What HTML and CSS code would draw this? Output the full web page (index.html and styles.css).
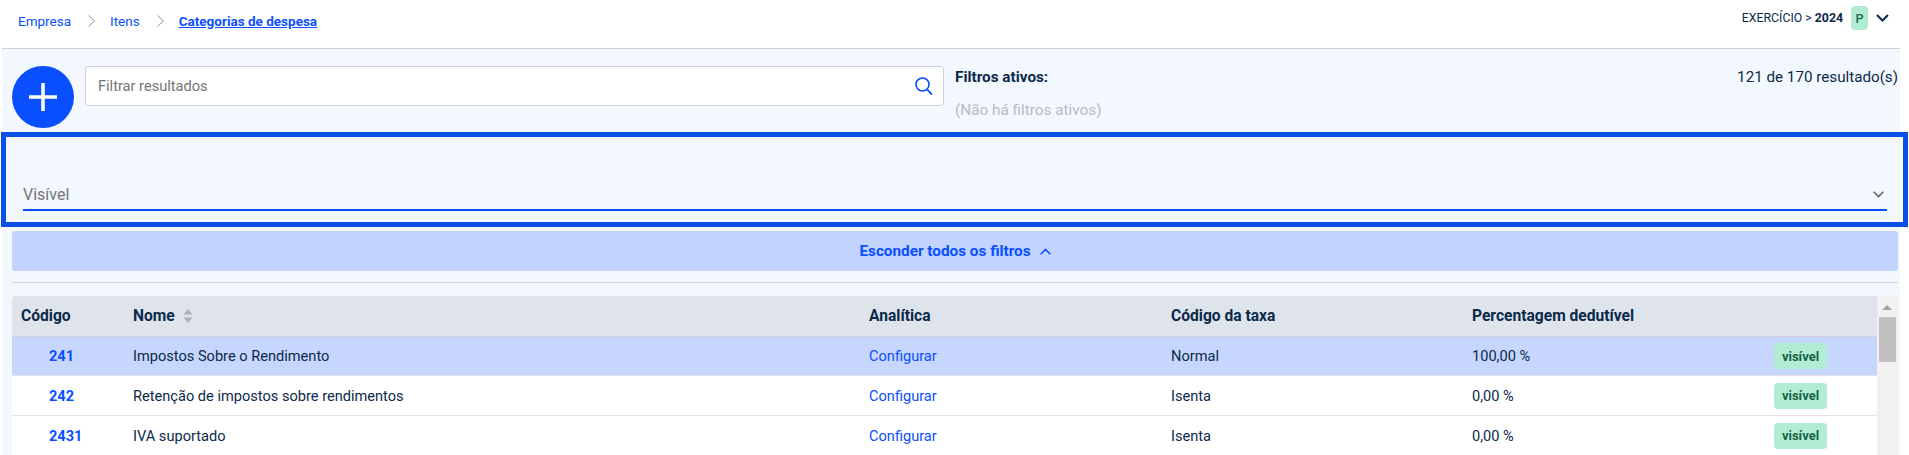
FILE: index.html
```html
<!DOCTYPE html>
<html lang="pt">
<head>
<meta charset="utf-8">
<title>Categorias de despesa</title>
<link rel="stylesheet" href="styles.css">
</head>
<body>
<header class="topbar">
  <nav class="crumbs">
    <a href="#">Empresa</a>
    <svg class="crumb-sep" viewBox="0 0 7 12" width="7" height="12"><path d="M.5.5L6.500 6 .5 11.500" fill="none" stroke="#8a94a3" stroke-width="1"/></svg>
    <a href="#">Itens</a>
    <svg class="crumb-sep" viewBox="0 0 7 12" width="7" height="12"><path d="M.5.5L6.500 6 .5 11.500" fill="none" stroke="#8a94a3" stroke-width="1"/></svg>
    <a href="#" class="current">Categorias de despesa</a>
  </nav>
  <div class="year">
    <span class="year-text">EXERCÍCIO &gt; <b>2024</b></span>
    <span class="p-badge">P</span>
    <svg viewBox="0 0 13 8" width="13" height="8"><path d="M1 1l5.500 5.500L12 1" fill="none" stroke="#0b2a4a" stroke-width="2"/></svg>
  </div>
</header>
<main class="main">
  <section class="toolbar">
    <button class="add" type="button" aria-label="Adicionar">
      <svg viewBox="0 0 28 28" width="28" height="28"><path d="M14 0v28M0 14h28" stroke="#fff" stroke-width="3.500" fill="none"/></svg>
    </button>
    <div class="search">
      <span class="search-ph">Filtrar resultados</span>
      <svg viewBox="0 0 18 19" width="18" height="19"><circle cx="7.500" cy="7.500" r="6.500" fill="none" stroke="#0a4fff" stroke-width="1.600"/><path d="M12.300 12.600L17 17.600" stroke="#0a4fff" stroke-width="1.800" fill="none"/></svg>
    </div>
    <div class="active">
      <div class="active-title">Filtros ativos:</div>
      <div class="active-none">(Não há filtros ativos)</div>
    </div>
    <div class="count">121 de 170 resultado(s)</div>
  </section>
  <section class="filters">
    <div class="select">
      <span>Visível</span>
      <svg viewBox="0 0 11 7" width="11" height="7"><path d="M.7.8l4.800 4.800L10.300.8" fill="none" stroke="#666" stroke-width="1.500"/></svg>
    </div>
  </section>
  <button class="hide" type="button">
    <span>Esconder todos os filtros</span>
    <svg viewBox="0 0 11 7" width="11" height="7"><path d="M.7 6.200l4.800-4.800 4.800 4.800" fill="none" stroke="#0a4fff" stroke-width="1.500"/></svg>
  </button>
  <hr class="divider">
  <section class="table-wrap">
    <div class="table">
      <div class="row head">
        <div class="c-code">Código</div>
        <div class="c-name">Nome
          <svg class="sort" viewBox="0 0 10 14" width="10" height="14"><path d="M5 0l4.500 5.500h-9zM5 14l4.500-5.500h-9z" fill="#a9b2bf"/></svg>
        </div>
        <div class="c-ana">Analítica</div>
        <div class="c-tax">Código da taxa</div>
        <div class="c-pct">Percentagem dedutível</div>
        <div class="c-tag"></div>
      </div>
      <div class="row selected">
        <div class="c-code"><a href="#">241</a></div>
        <div class="c-name">Impostos Sobre o Rendimento</div>
        <div class="c-ana"><a href="#">Configurar</a></div>
        <div class="c-tax">Normal</div>
        <div class="c-pct">100,00 %</div>
        <div class="c-tag"><span class="tag">visível</span></div>
      </div>
      <div class="row">
        <div class="c-code"><a href="#">242</a></div>
        <div class="c-name">Retenção de impostos sobre rendimentos</div>
        <div class="c-ana"><a href="#">Configurar</a></div>
        <div class="c-tax">Isenta</div>
        <div class="c-pct">0,00 %</div>
        <div class="c-tag"><span class="tag">visível</span></div>
      </div>
      <div class="row">
        <div class="c-code"><a href="#">2431</a></div>
        <div class="c-name">IVA suportado</div>
        <div class="c-ana"><a href="#">Configurar</a></div>
        <div class="c-tax">Isenta</div>
        <div class="c-pct">0,00 %</div>
        <div class="c-tag"><span class="tag">visível</span></div>
      </div>
    </div>
    <div class="scrollbar">
      <div class="arrow"></div>
      <div class="thumb"></div>
    </div>
  </section>
</main>
</body>
</html>
```
FILE: styles.css
```css
* { box-sizing: border-box; }
html, body { margin: 0; height: 455px; overflow: hidden; background: #fff; }
body { font-family: Roboto, "Liberation Sans", sans-serif; font-size: 14.600px; color: #0b2a4a; }
a { color: #0a4fff; text-decoration: none; }

.topbar { height: 49px; margin-left: 2px; margin-right: 9px; padding: 0 0 0 16px; display: flex; align-items: flex-start; justify-content: space-between; border-bottom: 1px solid #c9d4e2; }
.crumbs { display: flex; align-items: center; height: 41px; font-size: 13.500px; }
.crumb-sep { margin: 0 15px 0 17px; }
.current { font-weight: 700; text-decoration: underline; }
.year { display: flex; align-items: center; height: 36px; padding-right: 11px; }
.year-text { font-size: 12.300px; }
.year-text b { font-weight: 700; }
.p-badge { width: 17px; height: 24px; margin: 0 8px; background: #b2edd3; border-radius: 4px; color: #1d6a4c; font-size: 12.500px; font-weight: 500; display: flex; align-items: center; justify-content: center; }

.main { margin-left: 2px; margin-right: 9px; height: 406px; background: #f3f7fe; }
.toolbar { height: 83px; padding: 17px 2px 0 10px; display: flex; align-items: flex-start; }
.add { width: 62px; height: 62px; border: 0; padding: 0; border-radius: 50%; background: #0a4fff; display: flex; align-items: center; justify-content: center; flex: none; }
.search { width: 859px; height: 40px; margin-left: 11px; padding: 0 10px 0 12px; flex: none; background: #fff; border: 1px solid #ccd1d9; border-radius: 3px; display: flex; align-items: center; justify-content: space-between; color: #757575; }
.active { margin-left: 11px; flex: 1; font-size: 15.300px; }
.active-title { font-weight: 700; height: 24px; line-height: 23px; }
.active-none { margin-top: 10px; line-height: 20px; color: #b6bcc6; }
.count { font-size: 15.200px; line-height: 23px; white-space: nowrap; }

.filters { height: 95px; margin: 0 -8px 0 -1px; padding: 0 16px 11px 17px; border: 5px solid #0a4fe6; display: flex; align-items: flex-end; }
.select { flex: 1; height: 33px; padding: 2px 3px 0 0; border-bottom: 2px solid #0a4fff; font-size: 16px; color: #757575; display: flex; align-items: center; justify-content: space-between; }

.hide { width: 1886px; height: 40px; margin: 4px 0 0 10px; display: flex; align-items: center; justify-content: center; gap: 9px; background: #c2d3fe; border: 0; border-radius: 3px; font: 700 15.300px Roboto, sans-serif; color: #0a4fff; }
.divider { width: 1886px; height: 1px; margin: 11px 0 13px 10px; border: 0; background: #cdd4e2; }

.table-wrap { width: 1886px; height: 160px; margin-left: 10px; display: flex; overflow: hidden; border-radius: 4px 4px 0 0; }
.table { flex: 1; background: #fff; }
.row { display: grid; grid-template-columns: 121px 736px 302px 301px 302px 1fr; align-items: center; height: 40px; border-bottom: 1px solid #e0e3ea; }
.head { height: 41px; background: #dee3ec; font-weight: 700; font-size: 15.600px; border-bottom: 1px solid #ccd1d9; }
.selected { height: 39px; background: #c6d6fd; }
.c-code { padding-left: 9px; }
.row:not(.head) .c-code { padding-left: 37px; font-weight: 700; }
.c-name { display: flex; align-items: center; gap: 8px; }
.sort { flex: none; }
.tag { display: flex; width: 53px; height: 26px; align-items: center; justify-content: center; background: #b2edd3; border-radius: 4px; color: #14614a; font-size: 13px; font-weight: 700; }

.scrollbar { width: 21px; background: #f1f1f1; flex: none; position: relative; padding-top: 21px; }
.arrow { position: absolute; top: 9px; left: 5px; width: 0; height: 0; border: 5px solid transparent; border-top: 0; border-bottom: 5px solid #a3a3a3; }
.thumb { width: 17px; height: 45px; margin-left: 2px; background: #c1c1c1; }
```
